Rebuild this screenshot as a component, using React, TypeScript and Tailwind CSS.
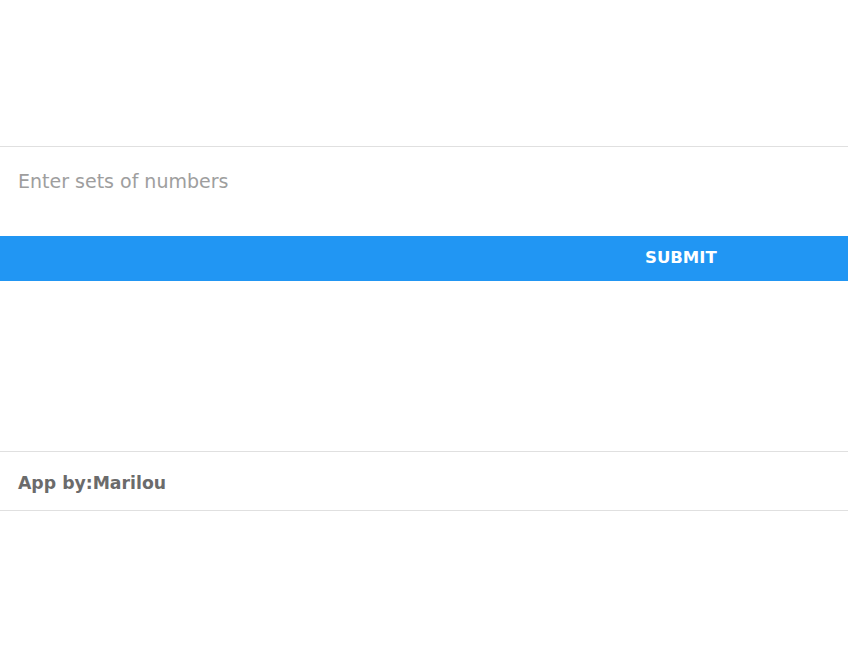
export default function App() {
  return (
    <div className="min-h-[657px] w-full bg-white font-['Comic_Sans_MS','DejaVu_Sans',sans-serif]">
      <div className="h-[146px]" />

      <form className="border-t border-[#e0e0e0]" onSubmit={(event) => event.preventDefault()}>
        <input
          type="text"
          placeholder="Enter sets of numbers"
          className="block h-[89px] w-full bg-transparent px-[18px] pb-[22px] text-[19px] text-[#333] outline-none placeholder:text-[#9e9e9e]"
        />
        <button
          type="submit"
          className="flex h-[45px] w-full items-center bg-[#2196f3] pl-[645px] text-[16.5px] font-bold text-white"
        >
          SUBMIT
        </button>
      </form>

      <div className="h-[170px]" />

      <footer className="flex h-[60px] items-center border-y border-[#e0e0e0] px-[18px]">
        <p className="pt-[5px] text-[17.3px] font-bold text-[#6b6b6b]">App by:Marilou</p>
      </footer>
    </div>
  )
}
